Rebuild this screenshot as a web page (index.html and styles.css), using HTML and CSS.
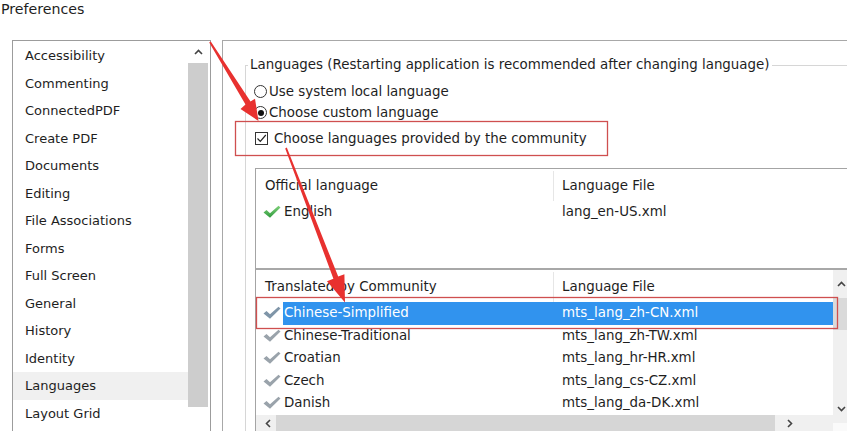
FILE: index.html
```html
<!DOCTYPE html>
<html>
<head>
<meta charset="utf-8">
<title>Preferences</title>
<link rel="stylesheet" href="styles.css">
</head>
<body>
<div class="page">
  <div class="title">Preferences</div>
  <div class="main">
    <div class="catbox">
      <ul class="catlist">
        <li>Accessibility</li>
        <li>Commenting</li>
        <li>ConnectedPDF</li>
        <li>Create PDF</li>
        <li>Documents</li>
        <li>Editing</li>
        <li>File Associations</li>
        <li>Forms</li>
        <li>Full Screen</li>
        <li>General</li>
        <li>History</li>
        <li>Identity</li>
        <li class="sel">Languages</li>
        <li>Layout Grid</li>
      </ul>
      <div class="vscroll">
        <div class="sb-arrow"><svg width="9" height="6" viewBox="0 0 9 6"><path d="M1 5 L4.5 1.5 L8 5" fill="none" stroke="#444" stroke-width="1.6"/></svg></div>
        <div class="sb-thumb"></div>
      </div>
    </div>
    <div class="panel">
      <fieldset class="group">
        <legend>Languages (Restarting application is recommended after changing language)</legend>
        <div class="gbody">
          <div class="opt"><span class="radio"></span>Use system local language</div>
          <div class="opt"><span class="radio on"></span>Choose custom language</div>
          <div class="opt chk"><span class="checkbox"><svg width="11" height="11" viewBox="0 0 11 11"><path d="M1.5 5.5 L4.3 8.3 L9.8 2" fill="none" stroke="#222" stroke-width="1.2"/></svg></span>Choose languages provided by the community</div>
          <div class="tables">
            <div class="official">
              <div class="thead"><div class="c1">Official language</div><div class="c2">Language File</div></div>
              <div class="trow">
                <div class="ico"><svg width="18" height="14" viewBox="0 0 18 14"><defs><linearGradient id="g" x1="0" y1="0" x2="0" y2="1"><stop offset="0" stop-color="#7fd07a"/><stop offset="1" stop-color="#2f9a3c"/></linearGradient></defs><polygon points="0.5,7.5 3.5,5 7,8.3 15.5,0.8 17.5,2.6 7,12.8" fill="url(#g)"/></svg></div>
                <div class="cells"><div class="c1">English</div><div class="c2">lang_en-US.xml</div></div>
              </div>
            </div>
            <div class="community">
              <div class="cmain">
                <div class="thead"><div class="c1">Translated by Community</div><div class="c2">Language File</div></div>
                <div class="trow sel">
                  <div class="ico"><svg width="18" height="14" viewBox="0 0 18 14"><polygon points="0.5,7.5 3.5,5 7,8.3 15.5,0.8 17.5,2.6 7,12.8" fill="#7f95a8"/></svg></div>
                  <div class="cells"><div class="c1">Chinese-Simplified</div><div class="c2">mts_lang_zh-CN.xml</div></div>
                </div>
                <div class="trow">
                  <div class="ico"><svg width="18" height="14" viewBox="0 0 18 14"><polygon points="0.5,7.5 3.5,5 7,8.3 15.5,0.8 17.5,2.6 7,12.8" fill="#9aa3ab"/></svg></div>
                  <div class="cells"><div class="c1">Chinese-Traditional</div><div class="c2">mts_lang_zh-TW.xml</div></div>
                </div>
                <div class="trow">
                  <div class="ico"><svg width="18" height="14" viewBox="0 0 18 14"><polygon points="0.5,7.5 3.5,5 7,8.3 15.5,0.8 17.5,2.6 7,12.8" fill="#9aa3ab"/></svg></div>
                  <div class="cells"><div class="c1">Croatian</div><div class="c2">mts_lang_hr-HR.xml</div></div>
                </div>
                <div class="trow">
                  <div class="ico"><svg width="18" height="14" viewBox="0 0 18 14"><polygon points="0.5,7.5 3.5,5 7,8.3 15.5,0.8 17.5,2.6 7,12.8" fill="#9aa3ab"/></svg></div>
                  <div class="cells"><div class="c1">Czech</div><div class="c2">mts_lang_cs-CZ.xml</div></div>
                </div>
                <div class="trow">
                  <div class="ico"><svg width="18" height="14" viewBox="0 0 18 14"><polygon points="0.5,7.5 3.5,5 7,8.3 15.5,0.8 17.5,2.6 7,12.8" fill="#9aa3ab"/></svg></div>
                  <div class="cells"><div class="c1">Danish</div><div class="c2">mts_lang_da-DK.xml</div></div>
                </div>
                <div class="hscroll">
                  <span class="hs-arrow"><svg width="6" height="9" viewBox="0 0 6 9"><path d="M5 1 L1.5 4.5 L5 8" fill="none" stroke="#444" stroke-width="1.6"/></svg></span>
                  <span class="hs-thumb"></span>
                  <span class="hs-arrow right"><svg width="6" height="9" viewBox="0 0 6 9"><path d="M1 1 L4.5 4.5 L1 8" fill="none" stroke="#444" stroke-width="1.6"/></svg></span>
                </div>
              </div>
              <div class="cscroll">
                <div class="cs-arrow"><svg width="9" height="6" viewBox="0 0 9 6"><path d="M1 5 L4.5 1.5 L8 5" fill="none" stroke="#444" stroke-width="1.6"/></svg></div>
                <div class="cs-thumb"></div>
                <div class="cs-track"></div>
                <div class="cs-arrow"><svg width="9" height="6" viewBox="0 0 9 6"><path d="M1 1 L4.5 4.5 L8 1" fill="none" stroke="#444" stroke-width="1.6"/></svg></div>
                <div class="cs-corner"></div>
              </div>
            </div>
          </div>
        </div>
      </fieldset>
    </div>
  </div>
  <svg class="annot" width="847" height="431" viewBox="0 0 847 431">
    <rect x="235.5" y="121.5" width="372" height="34" fill="none" stroke="#cf4f4f" stroke-width="1.3"/>
    <rect x="256.5" y="297.5" width="581" height="31" fill="none" stroke="#cf4f4f" stroke-width="1.3"/>
    <polygon points="209.2,42.5 210.8,41.5 250.5,101.5 255,98.7 258.5,121 240.5,109 245.5,104.6" fill="#e8312f"/>
    <polygon points="285.2,148.4 286.8,147.6 338.2,276.5 344.4,274.3 345,302.5 327,281.2 333.4,278.7" fill="#e8312f"/>
  </svg>
</div>
</body>
</html>
```
FILE: styles.css
```css
* { box-sizing: border-box; }
html, body { margin: 0; padding: 0; background: #fff; }
body {
  font-family: "DejaVu Sans", Verdana, sans-serif;
  font-size: 13px;
  color: #1e1e1e;
}
.page {
  position: relative;
  width: 847px;
  height: 431px;
  overflow: hidden;
}
.title {
  height: 40px;
  padding: 1px 0 0 1px;
  line-height: 16px;
  font-size: 14.2px;
}
.main {
  display: flex;
  padding-left: 12px;
  gap: 11px;
}
.catbox {
  flex: none;
  width: 199px;
  height: 400px;
  border: 1px solid #9c9c9c;
  display: flex;
  padding-right: 2px;
}
.catlist {
  list-style: none;
  margin: 0;
  padding: 1px 0 0 0;
  width: 175px;
}
.catlist li {
  height: 27.5px;
  line-height: 27.5px;
  padding-left: 12px;
}
.catlist li.sel { background: #f0f0f0; }
.vscroll {
  width: 20px;
  display: flex;
  flex-direction: column;
}
.sb-arrow {
  height: 22px;
  display: flex;
  align-items: center;
  justify-content: center;
}
.sb-thumb {
  height: 344px;
  background: #cdcdcd;
}
.panel {
  flex: none;
  width: 650px;
  height: 400px;
  border-top: 1px solid #a8a8a8;
  border-left: 1px solid #a8a8a8;
  padding: 16px 0 0 22px;
  font-size: 13.4px;
}
.group {
  margin: 0;
  padding: 0;
  min-width: 0;
  border: none;
  border-top: 1px solid #d6d6d6;
  border-left: 1px solid #d6d6d6;
  height: 380px;
}
.group legend {
  margin-left: 2px;
  padding: 0 2px;
  line-height: 16px;
}
.gbody { padding: 8px 0 0 9px; }
.opt {
  display: flex;
  align-items: center;
  height: 21px;
}
.radio {
  width: 13px;
  height: 13px;
  border: 1px solid #333;
  border-radius: 50%;
  margin-left: -1px;
  margin-right: 2px;
  position: relative;
  flex: none;
}
.radio.on::after {
  content: "";
  position: absolute;
  left: 2.5px;
  top: 2.5px;
  width: 6px;
  height: 6px;
  border-radius: 50%;
  background: #111;
}
.opt.chk { height: 30px; }
.checkbox {
  width: 13px;
  height: 13px;
  border: 1px solid #333;
  margin-right: 6px;
  flex: none;
  display: flex;
  align-items: center;
  justify-content: center;
}
.tables {
  margin-top: 15px;
  width: 594px;
  border-top: 1px solid #a4a4a4;
  border-left: 1px solid #a4a4a4;
}
.official {
  height: 101px;
  border-bottom: 2px solid #a8a8a8;
}
.thead {
  display: flex;
  height: 32px;
  padding-top: 2px;
  line-height: 30px;
}
.thead .c1 {
  width: 297px;
  padding-left: 9px;
}
.thead .c2 {
  padding-left: 8px;
  border-left: 1px solid #e6e6e6;
  flex: 1;
}
.trow {
  display: flex;
  height: 22px;
  line-height: 22px;
}
.community .trow {
  height: 22.5px;
  line-height: 22.5px;
}
.ico {
  width: 27px;
  padding-left: 7px;
  display: flex;
  align-items: center;
  flex: none;
}
.cells {
  display: flex;
  flex: 1;
}
.cells .c1 {
  width: 270px;
  padding-left: 1px;
}
.cells .c2 {
  padding-left: 9px;
  flex: 1;
}
.trow.sel .cells {
  background: #3193ee;
  color: #fff;
}
.community {
  display: flex;
}
.cmain {
  width: 577px;
}
.hscroll {
  display: flex;
  align-items: center;
  height: 17px;
  background: #f0f0f0;
}
.hs-arrow {
  width: 20px;
  display: flex;
  justify-content: center;
  align-items: center;
  padding-left: 3px;
}
.hs-arrow.right { width: 58px; padding-left: 12px; justify-content: flex-start; }
.hs-thumb {
  width: 499px;
  height: 17px;
  background: #d6d6d6;
}
.cscroll {
  width: 16px;
  display: flex;
  flex-direction: column;
  background: #f0f0f0;
}
.cs-arrow {
  height: 28px;
  display: flex;
  align-items: center;
  justify-content: center;
}
.cs-thumb {
  height: 32px;
  background: #dadada;
}
.cs-track { height: 65px; }
.cs-corner { height: 17px; background: #fafafa; }
.annot {
  position: absolute;
  left: 0;
  top: 0;
  pointer-events: none;
}
```
